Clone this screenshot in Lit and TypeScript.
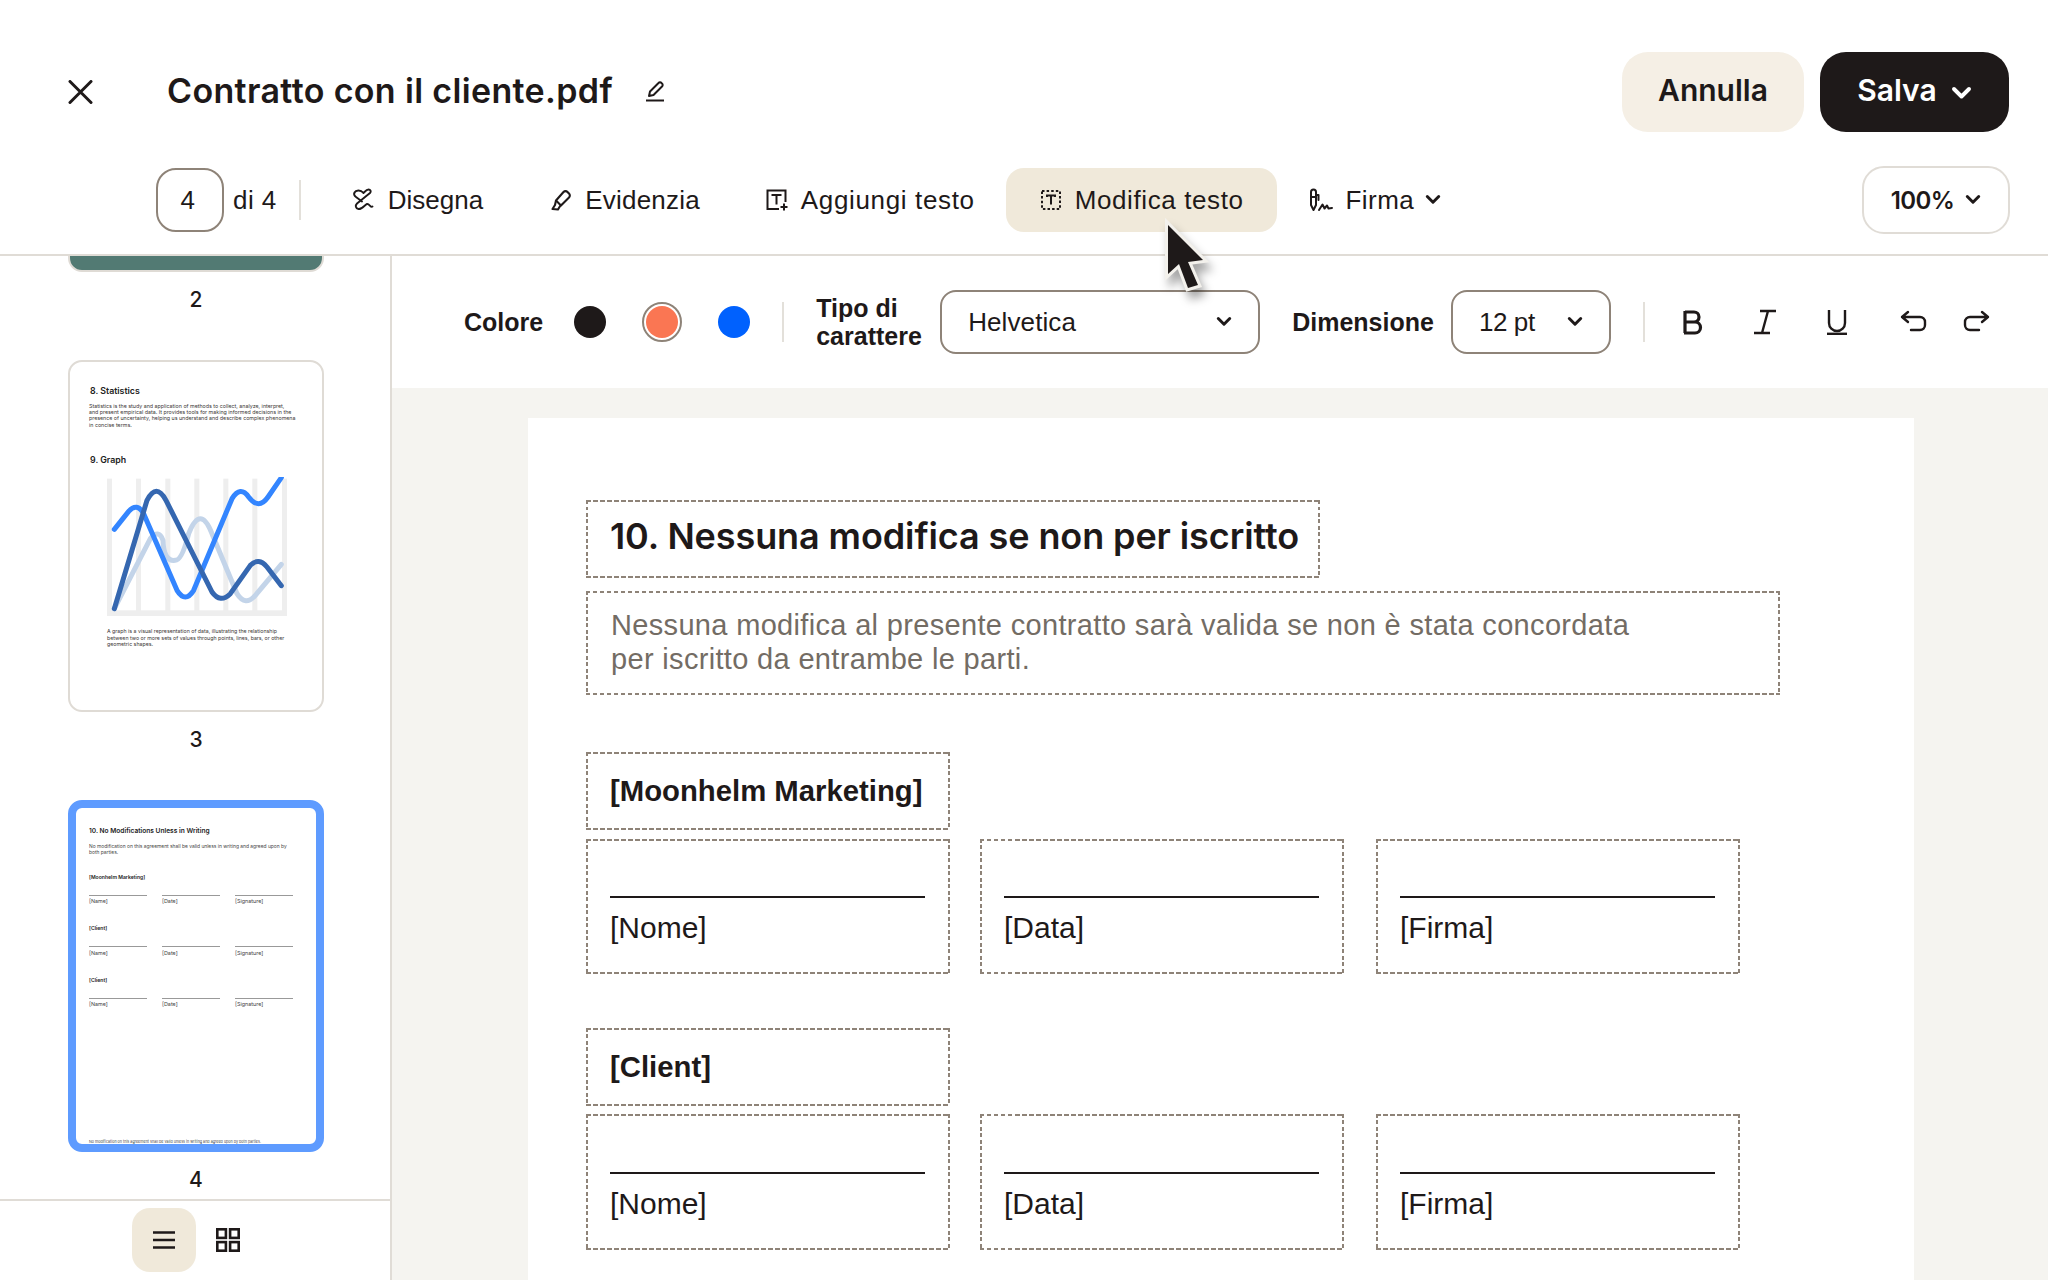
import { LitElement, html, css, svg } from "lit";
import { customElement } from "lit/decorators.js";

const chevron = html`<svg class="chev" viewBox="0 0 14 10"><path d="M2 2l5 5 5-5" fill="none" stroke="currentColor" stroke-width="2.6" stroke-linecap="round" stroke-linejoin="round"/></svg>`;

@customElement("app-root")
export class AppRoot extends LitElement {
  static styles = css`
    :host { display: block; width: 2048px; height: 1280px; overflow: hidden; position: relative; background: #fff; color: #1e1919; font-family: "Liberation Sans", Arial, sans-serif; }
    * { box-sizing: border-box; }
    svg { display: block; flex: none; }
    .top { display: flex; align-items: center; height: 80px; margin-top: 52px; padding-left: 68px; padding-right: 39px; }
    .close { margin-right: 74px; }
    .title { font: 600 34px "Inter", sans-serif; letter-spacing: 0.35px; padding-bottom: 3px; white-space: nowrap; }
    .pen { margin-left: 30px; margin-bottom: 2px; }
    .spacer { flex: 1; }
    .btn { height: 80px; border-radius: 26px; display: flex; align-items: center; justify-content: center; font: 600 30px "Inter", sans-serif; padding-bottom: 4px; }
    .cancel { width: 182px; background: #f5efe5; margin-right: 16px; }
    .save { width: 189px; background: #1e1919; color: #fff; gap: 14px; }
    .save .chev { width: 21px; height: 15px; margin-top: 6px; }
    .tools { display: flex; align-items: center; height: 64px; margin-top: 36px; padding-left: 156px; padding-right: 38px; font-size: 26px; letter-spacing: 0.45px; }
    .pageno { width: 68px; height: 64px; border: 2.5px solid #8e8378; border-radius: 20px; display: flex; align-items: center; justify-content: center; margin-right: 9px; padding-right: 4px; }
    .vdiv { width: 2px; height: 40px; background: #e3e0da; flex: none; }
    .tools .vdiv { margin: 0 16px 0 22px; }
    .tool { height: 64px; display: flex; align-items: center; gap: 13px; padding: 0 34px; border-radius: 18px; white-space: nowrap; }
    .tool.draw { letter-spacing: 0.02px; }
    .tool.mark { letter-spacing: 0.2px; }
    .tool.add { letter-spacing: 0.65px; padding: 0 31px; gap: 12px; }
    .tool.active { background: #f0e9da; letter-spacing: 0.6px; padding-right: 33px; }
    .tool.firma { padding: 0 0 0 31px; gap: 12px; }
    .chev { width: 16px; height: 12px; }
    .tool .chev { margin-left: -1px; }
    .zoom { width: 148px; height: 68px; border: 2.5px solid #e0dcd6; border-radius: 22px; display: flex; align-items: center; justify-content: center; gap: 11px; font: 600 24px "Inter", sans-serif; letter-spacing: -0.6px; }
    .rule { height: 2px; background: #e0dcd6; margin-top: 22px; }
    .body { display: flex; height: 1024px; }
    .side { width: 392px; flex: none; border-right: 2px solid #e0dcd6; display: flex; flex-direction: column; }
    .thumbs { height: 943px; overflow: hidden; display: flex; flex-direction: column; justify-content: flex-end; align-items: center; gap: 48px; padding: 0 0 7px 2px; }
    .item { display: flex; flex-direction: column; align-items: center; gap: 14px; flex: none; }
    .num { height: 26px; font: 500 21px/28px "Inter", sans-serif; }
    .thumb { width: 256px; height: 352px; border: 2.5px solid #dfdbd5; border-radius: 14px; background: #fff; overflow: hidden; flex: none; display: flex; flex-direction: column; }
    .thumb.green { background: #527a73; }
    .thumb.t3 { padding: 24px 20px 0 19px; color: #3a3634; }
    .mh { font: 600 8.800px/10px "Inter", sans-serif; color: #222; margin-left: 1px; }
    .mp { margin-top: 6.500px; white-space: nowrap; font: 400 5.300px/6.400px "Inter", sans-serif; }
    .mh2 { margin-top: 27px; }
    .chart { margin: 12px 0 0 18px; }
    .cap { margin: 12px 0 0 18px; white-space: nowrap; font: 400 5.250px/6.400px "Inter", sans-serif; }
    .thumb.t4 { border: 8px solid #5e9bff; padding: 19px 12px 0 13px; color: #444; font: 400 4.900px/6px "Inter", sans-serif; }
    .t4 .h { font: 600 6.600px/8px "Inter", sans-serif; color: #222; }
    .t4 .p { margin-top: 7.500px; white-space: nowrap; }
    .t4 .o { font-weight: 600; font-size: 5.100px; color: #222; height: 6px; }
    .t4 .o.first { margin-top: 19px; }
    .t4 .o.next { margin-top: 21px; }
    .t4 .sig { display: grid; grid-template-columns: 58px 58px 58px; column-gap: 15px; margin-top: 15px; font-size: 5.400px; }
    .t4 .sig div { border-top: 1px solid #999; padding-top: 2.500px; }
    .t4 .foot { margin-top: auto; font-size: 3.700px; white-space: nowrap; line-height: 5px; }
    .foot-bar { flex: 1; border-top: 2px solid #e0dcd6; display: flex; justify-content: center; align-items: center; padding: 0 0 2px 1px; }
    .vb { width: 64px; height: 64px; display: flex; align-items: center; justify-content: center; border-radius: 18px; }
    .vb.on { background: #f0e9da; }
    .main { flex: 1; display: flex; flex-direction: column; min-width: 0; }
    .fmt { height: 132px; background: #fff; display: flex; align-items: center; padding-left: 72px; flex: none; }
    .lbl { font-size: 25px; font-weight: 700; line-height: 28px; white-space: nowrap; }
    .lbl.colore { margin-right: 27px; }
    .sw { width: 40px; height: 40px; border-radius: 50%; display: flex; align-items: center; justify-content: center; margin-right: 32px; flex: none; border: 2px solid transparent; }
    .sw i { display: block; width: 32px; height: 32px; border-radius: 50%; flex: none; }
    .sw.sel { border-color: #8e8378; }
    .sw.last { margin-right: 28px; }
    .tipo { margin: 0 16px 0 32px; width: 108px; }
    .sel-box { height: 64px; border: 2.5px solid #8e8378; border-radius: 16px; display: flex; align-items: center; justify-content: space-between; font-size: 26px; flex: none; }
    .font { width: 320px; padding: 0 26px 0 26px; letter-spacing: 0.1px; }
    .size { width: 160px; padding: 0 26px 0 26px; letter-spacing: -0.4px; }
    .dim { margin: 0 17px 0 32px; }
    .fmt .vdiv.e { margin-left: 32px; margin-right: 37px; }
    .i-b, .i-i { margin-right: 50px; }
    .i-u { margin-right: 52px; }
    .i-undo { margin-right: 34px; }
    .canvas { flex: 1; background: #f5f4f0; padding: 30px 134px 0 136px; overflow: hidden; }
    .page { background: #fff; height: 900px; padding: 82px 58px 0; display: flex; flex-direction: column; }
    .dash {
      display: flex; flex-direction: column; justify-content: center; padding: 0 24px; flex: none;
      background-image:
        repeating-linear-gradient(90deg, #8e8378 0 4.500px, transparent 4.500px 7px),
        repeating-linear-gradient(90deg, #8e8378 0 4.500px, transparent 4.500px 7px),
        repeating-linear-gradient(180deg, #8e8378 0 4px, transparent 4px 6.500px),
        repeating-linear-gradient(180deg, #8e8378 0 4px, transparent 4px 6.500px);
      background-size: 100% 2px, 100% 2px, 2px 100%, 2px 100%;
      background-position: 0 0, 0 100%, 0 0, 100% 0;
      background-repeat: no-repeat;
    }
    .d-h { width: 734px; height: 78px; font: 600 36px "Inter", sans-serif; letter-spacing: -0.1px; white-space: nowrap; padding-bottom: 6px; }
    .d-p { width: 1194px; height: 104px; margin-top: 13px; padding-left: 25px; padding-bottom: 2px; font-size: 29px; line-height: 34px; color: #736c64; letter-spacing: 0.33px; white-space: nowrap; }
    .d-o { width: 364px; height: 78px; margin-top: 57px; padding-bottom: 1px; font-size: 29.300px; font-weight: 700; white-space: nowrap; }
    .d-o.c { margin-top: 54px; }
    .row { display: flex; gap: 30px; margin-top: 9px; }
    .cell { width: 364px; height: 135px; justify-content: flex-start; padding: 57px 25px 0 24px; font-size: 30px; line-height: 36px; }
    .cell hr { height: 2px; background: #1e1919; border: 0; margin: 0 0 12px; flex: none; width: 100%; }
    .row .cell + .cell + .cell { margin-left: 2px; }
    .row.c { margin-top: 8px; }
    .row.c .cell { height: 136px; padding-top: 58px; }
    .cursor { position: absolute; left: 1140px; top: 200px; filter: drop-shadow(4px 8px 5px rgba(0,0,0,.35)); pointer-events: none; }
  `;

  chart() {
    const bars = [135, 222, 310, 397, 484, 571, 660];
    return html`<svg class="chart" width="180" height="139" viewBox="135 680 540 417">
      ${bars.map((x) => svg`<rect x="${x}" y="685" width="15" height="412" fill="#eee"/>`)}
      <rect x="135" y="1080" width="540" height="17" fill="#eee"/>
      <g fill="none" stroke-width="15" stroke-linecap="round" stroke-linejoin="round">
        <path stroke="#c3d4e9" d="M157 1075L265 865Q290 835 303 870Q305 935 340 930Q360 930 380 850Q415 760 450 850L525 1030Q550 1070 580 1035L658 942"/>
        <path stroke="#3385ff" d="M157 837L200 783Q225 755 245 790L345 1020Q370 1060 395 1020L510 745Q535 705 560 740Q590 780 618 740L658 682"/>
        <path stroke="#3567b0" d="M157 1075L255 750Q283 695 312 750L450 1025Q475 1060 505 1030L565 945Q590 920 615 950L658 1006"/>
      </g>
    </svg>`;
  }

  sig() {
    return html`<div class="sig"><div>[Name]</div><div>[Date]</div><div>[Signature]</div></div>`;
  }

  cells() {
    return ["[Nome]", "[Data]", "[Firma]"].map((t) => html`<div class="dash cell"><hr />${t}</div>`);
  }

  render() {
    return html`
      <div class="top">
        <svg class="close" width="25" height="24" viewBox="0 0 25 24"><path d="M2 1.500l21 21M23 1.500l-21 21" stroke="#1e1919" stroke-width="3" stroke-linecap="round"/></svg>
        <div class="title">Contratto con il cliente.pdf</div>
        <svg class="pen" width="24" height="24" viewBox="0 0 24 24" fill="none" stroke="#1e1919" stroke-width="2"><path d="M6 17l1-4.500L15.500 4a2 2 0 0 1 3 0l.5.5a2 2 0 0 1 0 3L10.500 16z" stroke-linejoin="round"/><path d="M3 21.500h18"/></svg>
        <div class="spacer"></div>
        <div class="btn cancel">Annulla</div>
        <div class="btn save">Salva ${chevron}</div>
      </div>
      <div class="tools">
        <div class="pageno">4</div>
        <span>di 4</span>
        <div class="vdiv"></div>
        <div class="tool draw">
          <svg width="24" height="24" viewBox="0 0 24 24" fill="none" stroke="#1e1919" stroke-width="1.900" stroke-linecap="round" stroke-linejoin="round"><path d="M21.500 18.500c-2 1.500-3-3-5.500-2.500-2 .5-5 5.500-8.500 5-3-.5-3.500-3.500-1.500-5.500L19 5c1.500-1.500.5-3.500-1.500-3.500-2 0-3 1.500-5 3.500"/><path d="M12 4.500C10 2 5 1.500 3.500 4.500c-1 2 0 3.500 1.500 4.500l6 4.500"/></svg>
          Disegna
        </div>
        <div class="tool mark">
          <svg width="21" height="22" viewBox="0 0 21 22" fill="none" stroke="#1e1919" stroke-width="2.100" stroke-linejoin="round"><path d="M5 11.500L12.500 3a2.800 2.800 0 0 1 4 0l1.500 1.500a2.800 2.800 0 0 1 0 4L10 16.500z"/><path d="M5 11.500l-1 4.500-2.500 4 5.500.5 1.500-2.500 1-1.500"/></svg>
          Evidenzia
        </div>
        <div class="tool add">
          <svg width="24" height="24" viewBox="0 0 24 24" fill="none" stroke="#1e1919" stroke-width="2"><path d="M14 21H2.500V2.500h18V14"/><path d="M7.500 8V7h8v1M11.500 7v9.500"/><path d="M19 15.500v7M15.500 19h7"/></svg>
          Aggiungi testo
        </div>
        <div class="tool active">
          <svg width="22" height="22" viewBox="0 0 22 22" fill="none" stroke="#1e1919" stroke-width="2"><rect x="2" y="2" width="18" height="18" stroke-dasharray="2.500 2.100"/><path d="M7 8V6.500h8V8M11 6.500v9"/></svg>
          Modifica testo
        </div>
        <div class="tool firma">
          <svg width="26" height="26" viewBox="0 0 26 26" fill="none" stroke="#1e1919" stroke-width="2" stroke-linejoin="round" stroke-linecap="round"><path d="M3 5a2.500 2.500 0 0 1 5 0v13l-2.500 5L3 18zM3 10h5"/><path d="M8 8h2.500v5"/><path d="M11 23l3.500-5.500 2 4 2.500-3 1.500 3 3.500-.5"/></svg>
          Firma ${chevron}
        </div>
        <div class="spacer"></div>
        <div class="zoom">100% ${chevron}</div>
      </div>
      <div class="rule"></div>
      <div class="body">
        <div class="side">
          <div class="thumbs">
            <div class="item"><div class="thumb green"></div><div class="num">2</div></div>
            <div class="item">
              <div class="thumb t3">
                <div class="mh">8. Statistics</div>
                <div class="mp">Statistics is the study and application of methods to collect, analyze, interpret,<br />and present empirical data. It provides tools for making informed decisions in the<br />presence of uncertainty, helping us understand and describe complex phenomena<br />in concise terms.</div>
                <div class="mh mh2">9. Graph</div>
                ${this.chart()}
                <div class="cap">A graph is a visual representation of data, illustrating the relationship<br />between two or more sets of values through points, lines, bars, or other<br />geometric shapes.</div>
              </div>
              <div class="num">3</div>
            </div>
            <div class="item">
              <div class="thumb t4">
                <div class="h">10. No Modifications Unless in Writing</div>
                <div class="p">No modification on this agreement shall be valid unless in writing and agreed upon by<br />both parties.</div>
                <div class="o first">[Moonhelm Marketing]</div>${this.sig()}
                <div class="o next">[Client]</div>${this.sig()}
                <div class="o next">[Client]</div>${this.sig()}
                <div class="foot">No modification on this agreement shall be valid unless in writing and agreed upon by both parties.</div>
              </div>
              <div class="num">4</div>
            </div>
          </div>
          <div class="foot-bar">
            <div class="vb on"><svg width="24" height="24" viewBox="0 0 24 24"><path d="M1 4.500h22M1 12h22M1 19.500h22" stroke="#1e1919" stroke-width="2.600"/></svg></div>
            <div class="vb"><svg width="24" height="24" viewBox="0 0 24 24" fill="none" stroke="#1e1919" stroke-width="2.600"><rect x="1.300" y="1.300" width="8.600" height="8.600"/><rect x="14.100" y="1.300" width="8.600" height="8.600"/><rect x="1.300" y="14.100" width="8.600" height="8.600"/><rect x="14.100" y="14.100" width="8.600" height="8.600"/></svg></div>
          </div>
        </div>
        <div class="main">
          <div class="fmt">
            <div class="lbl colore">Colore</div>
            <div class="sw"><i style="background:#1e1919"></i></div>
            <div class="sw sel"><i style="background:#fa7653"></i></div>
            <div class="sw last"><i style="background:#0061fe"></i></div>
            <div class="vdiv"></div>
            <div class="lbl tipo">Tipo di<br />carattere</div>
            <div class="sel-box font">Helvetica ${chevron}</div>
            <div class="lbl dim">Dimensione</div>
            <div class="sel-box size">12 pt ${chevron}</div>
            <div class="vdiv e"></div>
            <svg class="i-b" width="22" height="26" viewBox="0 0 22 26" fill="none" stroke="#1e1919" stroke-width="3.200"><path d="M3 2v22M3 3h9a5 5 0 0 1 0 10H3M3 13h10a5.500 5.500 0 0 1 0 11H2"/></svg>
            <svg class="i-i" width="22" height="26" viewBox="0 0 22 26" fill="none" stroke="#1e1919" stroke-width="2.400"><path d="M6 2h16M0 24h16M14 2L8 24"/></svg>
            <svg class="i-u" width="22" height="26" viewBox="0 0 22 26" fill="none" stroke="#1e1919" stroke-width="2.400"><path d="M3 1v13a8 8 0 0 0 16 0V1"/><path d="M1 25h20" stroke-width="2.800"/></svg>
            <svg class="i-undo" width="28" height="24" viewBox="0 0 28 24" fill="none" stroke="#1e1919" stroke-width="2.400" stroke-linecap="round" stroke-linejoin="round"><path d="M8 2L2 7l6 5M2 7h18a5 5 0 0 1 5 5v3a5 5 0 0 1-5 5h-9"/></svg>
            <svg width="28" height="24" viewBox="0 0 28 24" fill="none" stroke="#1e1919" stroke-width="2.400" stroke-linecap="round" stroke-linejoin="round"><path d="M20 2l6 5-6 5M26 7H8a5 5 0 0 0-5 5v3a5 5 0 0 0 5 5h9"/></svg>
          </div>
          <div class="canvas">
            <div class="page">
              <div class="dash d-h">10. Nessuna modifica se non per iscritto</div>
              <div class="dash d-p">Nessuna modifica al presente contratto sarà valida se non è stata concordata<br />per iscritto da entrambe le parti.</div>
              <div class="dash d-o">[Moonhelm Marketing]</div>
              <div class="row">${this.cells()}</div>
              <div class="dash d-o c">[Client]</div>
              <div class="row c">${this.cells()}</div>
            </div>
          </div>
        </div>
      </div>
      <svg class="cursor" width="110" height="110" viewBox="0 0 110 110"><path d="M28 25L63 60 48 62 58 85 48 88 39 64 28 74z" fill="#1e1919" stroke="#f3f1ec" stroke-width="6" stroke-linejoin="miter" paint-order="stroke"/></svg>
    `;
  }
}
